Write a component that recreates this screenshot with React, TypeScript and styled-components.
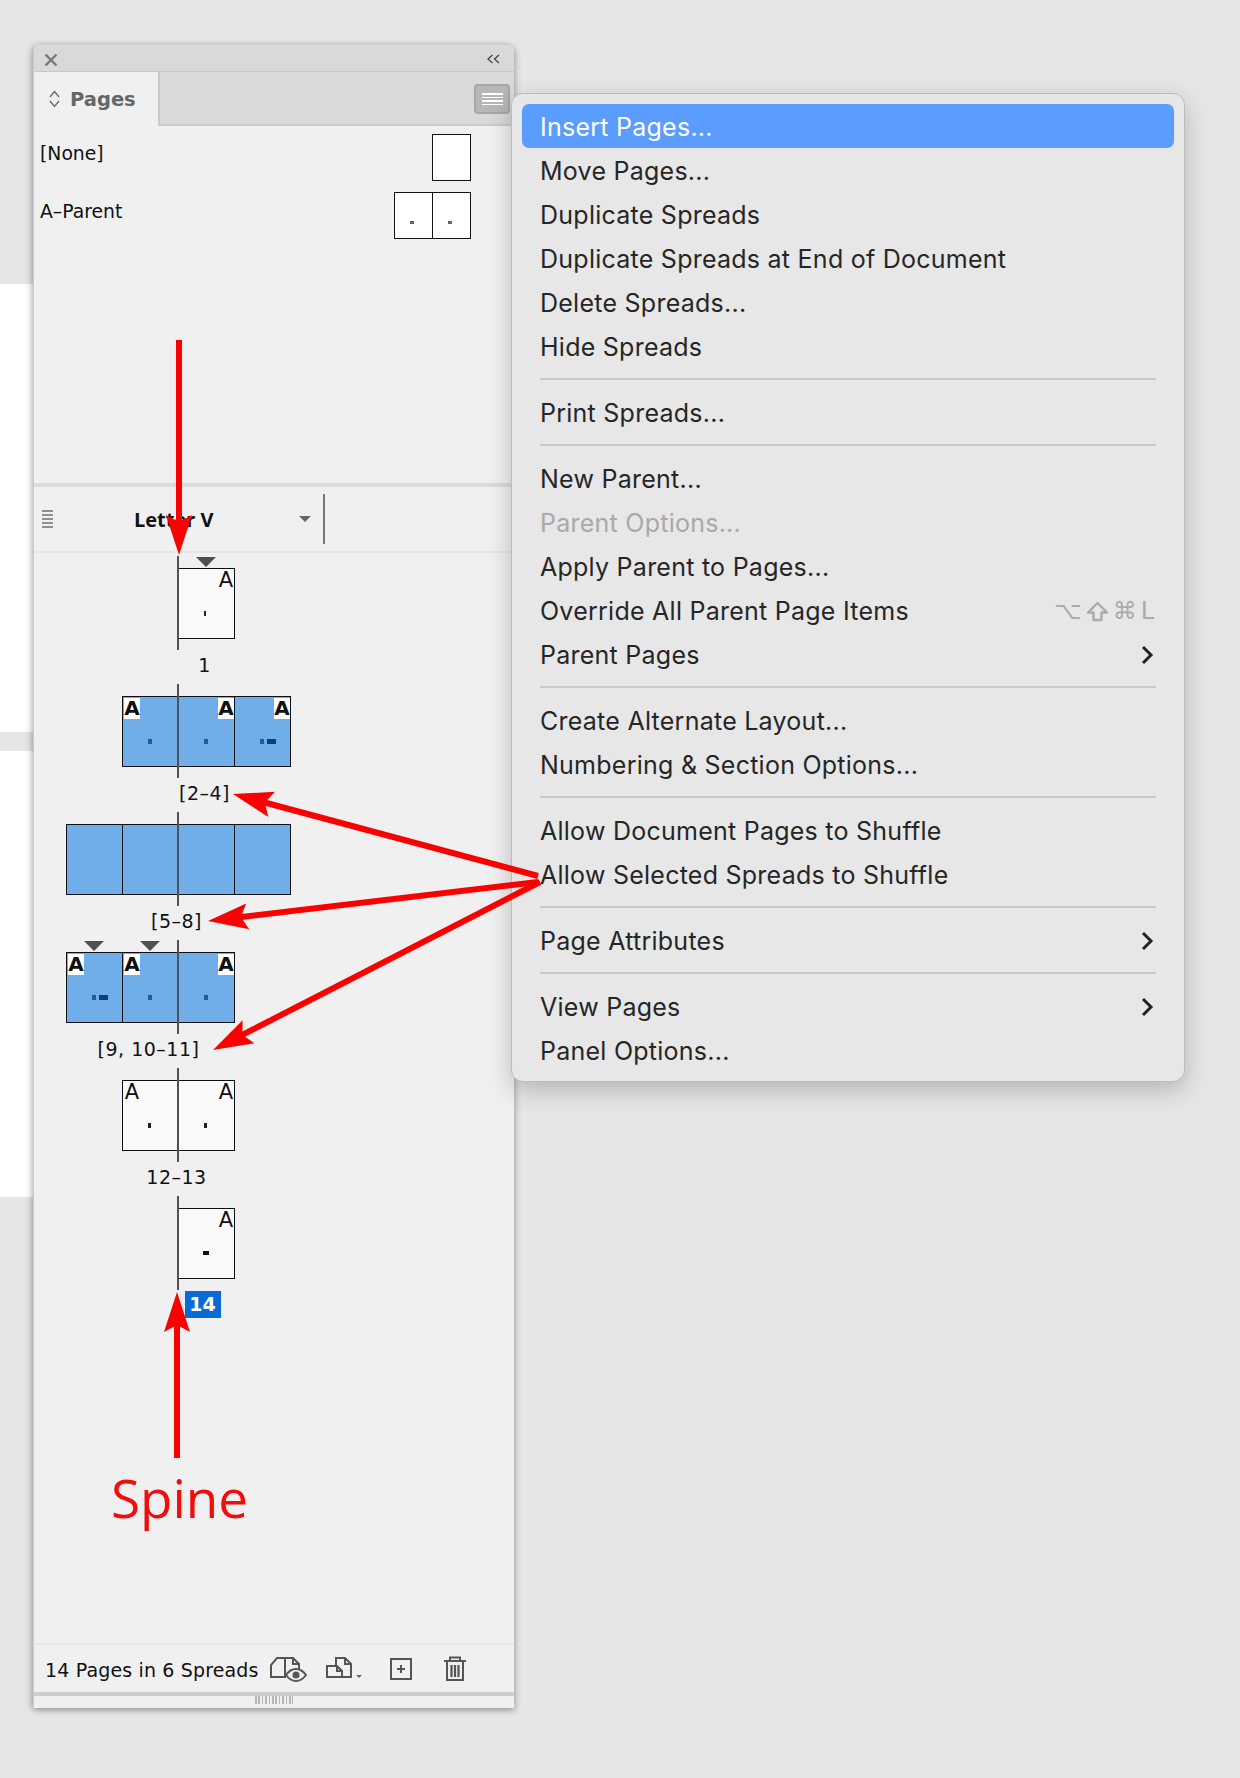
import React from "react";
import styled, { createGlobalStyle } from "styled-components";

const Global = createGlobalStyle`
  html, body { margin: 0; padding: 0; background: #e6e6e6; }
  * { box-sizing: border-box; }
`;

const Stage = styled.div`
  position: relative;
  width: 1240px;
  height: 1778px;
  padding-top: 44px;
  display: flex;
  align-items: flex-start;
  overflow: hidden;
  background: #e6e6e6;
`;

const Backdrop = styled.div`
  width: 33px;
  padding-top: 240px;
  display: flex;
  flex-direction: column;
  gap: 19px;
`;

const Sheet = styled.div<{ $h: number }>`
  height: ${(p) => p.$h}px;
  background: #fff;
`;

const Panel = styled.div`
  width: 481px;
  height: 1664px;
  display: flex;
  flex-direction: column;
  background: #f0f0f1;
  border-radius: 6px 6px 0 0;
  border-left: 1px solid #c9c9c9;
  box-shadow: -2px 1px 6px rgba(0, 0, 0, 0.22), 2px 3px 6px rgba(0, 0, 0, 0.2);
  font-family: "DejaVu Sans", sans-serif;
  color: #111;
`;

const TitleStrip = styled.div`
  height: 28px;
  flex: none;
  background: #d9d9d9;
  border-top: 1px solid #cbcbcb;
  border-bottom: 1px solid #c8c8c8;
  border-radius: 6px 6px 0 0;
  display: flex;
  align-items: center;
  justify-content: space-between;
  padding: 0 14px 0 10px;
`;

const CloseIcon = styled.svg`
  margin-top: 3px;
  fill: none;
  stroke: #777;
  stroke-width: 2.4;
`;

const CollapseIcon = styled.svg`
  margin-top: 1px;
  fill: none;
  stroke: #444;
  stroke-width: 1.4;
`;

const TabBar = styled.div`
  height: 54px;
  flex: none;
  background: #d9d9d9;
  border-bottom: 2px solid #cbcbcb;
  display: flex;
  align-items: flex-start;
  justify-content: space-between;
  padding-right: 4px;
`;

const Tab = styled.div`
  width: 126px;
  height: 54px;
  background: #f0f0f1;
  border-right: 2px solid #cbcbcb;
  display: flex;
  align-items: center;
  gap: 10px;
  padding: 0 0 0 15px;
  font-size: 19.5px;
  font-weight: 700;
  color: #666;
`;

const TabArrows = styled.svg`
  fill: none;
  stroke: #666;
  stroke-width: 1.3;
`;

const MenuButton = styled.div`
  width: 36px;
  height: 30px;
  margin-top: 12px;
  background: #b7b7b7;
  border: 2px solid #a6a6a6;
  border-radius: 4px;
  display: flex;
  flex-direction: column;
  align-items: center;
  justify-content: center;
  gap: 2px;
`;

const MenuLine = styled.span`
  width: 21px;
  height: 1.5px;
  background: #fff;
`;

const ParentList = styled.div`
  height: 357px;
  flex: none;
  padding: 8px 43px 0 6px;
  display: flex;
  flex-direction: column;
  gap: 11px;
`;

const ParentRow = styled.div`
  display: flex;
  justify-content: space-between;
  align-items: flex-start;
  font-size: 18.8px;
  line-height: 22px;
  height: 47px;
`;

const ParentName = styled.span`
  margin-top: 9px;
`;

const ParentThumbs = styled.div`
  display: flex;
`;

const ParentPage = styled.div`
  position: relative;
  width: 39px;
  height: 47px;
  margin-left: -1px;
  background: #fff;
  border: 1px solid #111;
  &:first-child { margin-left: 0; }
`;

const ParentDot = styled.span`
  position: absolute;
  left: 15px;
  top: 28px;
  width: 4px;
  height: 3px;
  background: #666;
`;

const Divider = styled.div`
  height: 4px;
  flex: none;
  background: #dbdbdb;
`;

const SizeRow = styled.div`
  height: 66px;
  flex: none;
  border-bottom: 2px solid #e6e6e6;
  display: flex;
  align-items: center;
  padding-left: 8px;
`;

const Grip = styled.div`
  width: 11px;
  display: flex;
  flex-direction: column;
  gap: 2px;
`;

const GripLine = styled.span`
  height: 2px;
  background: #8f8f8f;
`;

const SizeName = styled.span`
  margin-left: 81px;
  width: 165px;
  font-family: "Open Sans", sans-serif;
  font-size: 20px;
  font-weight: 700;
  color: #111;
`;

const DropArrow = styled.span`
  width: 0;
  height: 0;
  border-left: 6.5px solid transparent;
  border-right: 6.5px solid transparent;
  border-top: 6px solid #666;
`;

const SizeRule = styled.span`
  width: 2px;
  height: 50px;
  margin-left: 12px;
  background: #777;
`;

const PagesArea = styled.div`
  flex: 1;
  padding-top: 3px;
`;

const SpreadBlock = styled.div<{ $left: number }>`
  position: relative;
  width: fit-content;
  height: 128px;
  margin-left: ${(p) => 144 - p.$left * 56}px;
  padding-top: 12px;
  display: flex;
  flex-direction: column;
  align-items: center;
`;

const Strip = styled.div`
  display: flex;
`;

const Spine = styled.span<{ $left: number }>`
  position: absolute;
  top: 0;
  left: ${(p) => p.$left * 56 - 1}px;
  width: 2px;
  height: 94px;
  background: #4c5258;
  z-index: 2;
`;

const Page = styled.div<{ $blue?: boolean }>`
  position: relative;
  width: 57px;
  height: 71px;
  margin-left: -1px;
  background: ${(p) => (p.$blue ? "#70aee9" : "#fbfafa")};
  border: 1px solid #0c0f14;
  &:first-child { margin-left: 0; }
`;

const Marker = styled.span`
  position: absolute;
  top: -12px;
  left: 17px;
  width: 0;
  height: 0;
  border-left: 10px solid transparent;
  border-right: 10px solid transparent;
  border-top: 10px solid #4f4f4f;
`;

const PrefixA = styled.span<{ $blue?: boolean; $side: "l" | "r" }>`
  position: absolute;
  top: 1px;
  ${(p) => (p.$side === "l" ? "left: 1px;" : "right: 0;")}
  width: 16px;
  height: 21px;
  line-height: 21px;
  text-align: center;
  font-size: ${(p) => (p.$blue ? 20 : 21)}px;
  font-weight: ${(p) => (p.$blue ? 700 : 400)};
  color: #111;
  background: ${(p) => (p.$blue ? "#fff" : "transparent")};
`;

const Dot = styled.span<{ $l: number; $w: number; $h: number; $c: string }>`
  position: absolute;
  top: 42px;
  left: ${(p) => p.$l}px;
  width: ${(p) => p.$w}px;
  height: ${(p) => p.$h}px;
  background: ${(p) => p.$c};
`;

const SpreadLabel = styled.div`
  margin: 15px 4px 0 0;
  height: 22px;
  line-height: 22px;
  font-size: 19px;
  letter-spacing: 0.5px;
  white-space: nowrap;
`;

const CurrentLabel = styled.div`
  margin: 12px 8px 0 0;
  width: 36px;
  height: 27px;
  line-height: 27px;
  background: #0a6ad6;
  color: #fff;
  font-size: 19px;
  font-weight: 700;
  text-align: center;
`;

const Footer = styled.div`
  height: 49px;
  flex: none;
  border-top: 2px solid #e8e8e8;
  display: flex;
  align-items: center;
  padding-left: 11px;
`;

const FooterText = styled.span`
  font-size: 19px;
  letter-spacing: 0.15px;
  width: 225px;
  margin-top: 2px;
  white-space: nowrap;
`;

const FooterIcon = styled.svg<{ $gap: number }>`
  flex: none;
  margin-left: ${(p) => p.$gap}px;
  fill: none;
  stroke: #555;
  stroke-width: 2;
`;

const ResizeBar = styled.div`
  height: 16px;
  flex: none;
  border-top: 4px solid #cdcdcd;
  display: flex;
  justify-content: center;
`;

const ResizeTicks = styled.div`
  width: 38px;
  height: 8px;
  background: repeating-linear-gradient(90deg, #b5b5b5 0 1.5px, transparent 1.5px 3.4px);
`;

const Menu = styled.div`
  position: absolute;
  left: 511px;
  top: 93px;
  width: 674px;
  height: 989px;
  padding: 10px;
  background: #e7e7e7;
  border: 1px solid #bcbcbc;
  border-radius: 12px;
  box-shadow: 0 8px 24px rgba(0, 0, 0, 0.22);
  font-family: Inter, sans-serif;
  font-size: 25px;
  letter-spacing: 0.25px;
  color: #262626;
  z-index: 5;
`;

const MenuRow = styled.div<{ $active?: boolean; $off?: boolean }>`
  height: 44px;
  padding: 2px 20px 0 18px;
  display: flex;
  align-items: center;
  justify-content: space-between;
  border-radius: 7px;
  white-space: nowrap;
  background: ${(p) => (p.$active ? "#5a9cff" : "transparent")};
  color: ${(p) => (p.$active ? "#fff" : p.$off ? "#a9a9a9" : "inherit")};
`;

const MenuSep = styled.div`
  height: 2px;
  margin: 10px 18px;
  background: #cacaca;
`;

const Shortcut = styled.span`
  display: flex;
  align-items: center;
  gap: 4px;
  font-family: "DejaVu Sans", sans-serif;
  font-size: 24px;
  letter-spacing: 0;
  color: #ababab;
`;

const ShiftGlyph = styled.svg`
  fill: none;
  stroke: #ababab;
  stroke-width: 2.4;
  stroke-linejoin: round;
`;

const Chevron = styled.svg`
  fill: none;
  stroke: #222;
  stroke-width: 3;
`;

const Overlay = styled.svg`
  position: absolute;
  inset: 0;
  width: 1240px;
  height: 1778px;
  z-index: 6;
  pointer-events: none;
`;

const SpineNote = styled.span`
  position: absolute;
  left: 111px;
  top: 1459px;
  font-family: "Open Sans", sans-serif;
  font-size: 53px;
  line-height: 78px;
  color: #f20d0d;
  z-index: 6;
`;

type DotSpec = [number, number, number, string];

type P = {
  blue?: boolean;
  mark?: boolean;
  a?: "l" | "r";
  dots?: DotSpec[];
};

type S = { left: number; pages: P[]; label: string; current?: boolean };

const navy = "#1d5a9e";
const one: DotSpec[] = [[25, 4, 5, navy]];
const two: DotSpec[] = [[25, 4, 5, navy], [32, 9, 5, "#0d3f7c"]];
const ink: DotSpec[] = [[25, 2, 5, "#222"]];

const spreads: S[] = [
  { left: 0, label: "1", pages: [{ mark: true, a: "r", dots: ink }] },
  {
    left: 1,
    label: "[2–4]",
    pages: [
      { blue: true, a: "l", dots: one },
      { blue: true, a: "r", dots: one },
      { blue: true, a: "r", dots: two },
    ],
  },
  { left: 2, label: "[5–8]", pages: [{ blue: true }, { blue: true }, { blue: true }, { blue: true }] },
  {
    left: 2,
    label: "[9, 10–11]",
    pages: [
      { blue: true, mark: true, a: "l", dots: two },
      { blue: true, mark: true, a: "l", dots: one },
      { blue: true, a: "r", dots: one },
    ],
  },
  {
    left: 1,
    label: "12–13",
    pages: [
      { a: "l", dots: [[25, 3, 5, "#222"]] },
      { a: "r", dots: [[25, 3, 5, "#222"]] },
    ],
  },
  { left: 0, label: "14", current: true, pages: [{ a: "r", dots: [[24, 6, 4, "#111"]] }] },
];

type Item = { t: string; active?: boolean; off?: boolean; sub?: boolean; keys?: boolean } | "sep";

const items: Item[] = [
  { t: "Insert Pages...", active: true },
  { t: "Move Pages..." },
  { t: "Duplicate Spreads" },
  { t: "Duplicate Spreads at End of Document" },
  { t: "Delete Spreads..." },
  { t: "Hide Spreads" },
  "sep",
  { t: "Print Spreads..." },
  "sep",
  { t: "New Parent..." },
  { t: "Parent Options...", off: true },
  { t: "Apply Parent to Pages..." },
  { t: "Override All Parent Page Items", keys: true },
  { t: "Parent Pages", sub: true },
  "sep",
  { t: "Create Alternate Layout..." },
  { t: "Numbering & Section Options..." },
  "sep",
  { t: "Allow Document Pages to Shuffle" },
  { t: "Allow Selected Spreads to Shuffle" },
  "sep",
  { t: "Page Attributes", sub: true },
  "sep",
  { t: "View Pages", sub: true },
  { t: "Panel Options..." },
];

function Arrow({ x1, y1, x2, y2 }: { x1: number; y1: number; x2: number; y2: number }) {
  const len = Math.hypot(x2 - x1, y2 - y1);
  const ux = (x2 - x1) / len;
  const uy = (y2 - y1) / len;
  const nx = -uy;
  const ny = ux;
  const at = (back: number, side: number) => `${x2 - ux * back + nx * side},${y2 - uy * back + ny * side}`;
  return (
    <g>
      <line x1={x1} y1={y1} x2={x2 - ux * 28} y2={y2 - uy * 28} stroke="#fb0000" strokeWidth={6} />
      <polygon points={[at(0, 0), at(40, 13), at(33, 0), at(40, -13)].join(" ")} fill="#fb0000" />
    </g>
  );
}

export default function App() {
  return (
    <Stage>
      <Global />
      <Backdrop>
        <Sheet $h={448} />
        <Sheet $h={446} />
      </Backdrop>
      <Panel>
        <TitleStrip>
          <CloseIcon width="14" height="14" viewBox="0 0 14 14">
            <path d="M1.5 1.5 12.5 12.5M12.5 1.5 1.5 12.5" />
          </CloseIcon>
          <CollapseIcon width="13" height="10" viewBox="0 0 13 10">
            <path d="M5.5 1 1 5l4.5 4M12 1 7.5 5l4.5 4" />
          </CollapseIcon>
        </TitleStrip>
        <TabBar>
          <Tab>
            <TabArrows width="11" height="18" viewBox="0 0 11 18">
              <path d="M1 7 5.5 1.5 10 7M1 11l4.5 5.5L10 11" />
            </TabArrows>
            Pages
          </Tab>
          <MenuButton>
            <MenuLine />
            <MenuLine />
            <MenuLine />
            <MenuLine />
          </MenuButton>
        </TabBar>
        <ParentList>
          <ParentRow>
            <ParentName>[None]</ParentName>
            <ParentThumbs>
              <ParentPage />
            </ParentThumbs>
          </ParentRow>
          <ParentRow>
            <ParentName>A–Parent</ParentName>
            <ParentThumbs>
              <ParentPage>
                <ParentDot />
              </ParentPage>
              <ParentPage>
                <ParentDot />
              </ParentPage>
            </ParentThumbs>
          </ParentRow>
        </ParentList>
        <Divider />
        <SizeRow>
          <Grip>
            <GripLine />
            <GripLine />
            <GripLine />
            <GripLine />
            <GripLine />
          </Grip>
          <SizeName>Letter V</SizeName>
          <DropArrow />
          <SizeRule />
        </SizeRow>
        <PagesArea>
          {spreads.map((s) => (
            <SpreadBlock key={s.label} $left={s.left}>
              <Spine $left={s.left} />
              <Strip>
                {s.pages.map((p, i) => (
                  <Page key={i} $blue={p.blue}>
                    {p.mark && <Marker />}
                    {p.a && (
                      <PrefixA $blue={p.blue} $side={p.a}>
                        A
                      </PrefixA>
                    )}
                    {p.dots?.map((d, j) => (
                      <Dot key={j} $l={d[0]} $w={d[1]} $h={d[2]} $c={d[3]} />
                    ))}
                  </Page>
                ))}
              </Strip>
              {s.current ? <CurrentLabel>{s.label}</CurrentLabel> : <SpreadLabel>{s.label}</SpreadLabel>}
            </SpreadBlock>
          ))}
        </PagesArea>
        <Footer>
          <FooterText>14 Pages in 6 Spreads</FooterText>
          <FooterIcon $gap={0} width="37" height="26" viewBox="0 0 37 26">
            <path d="M1 21V9l6-7h8v19zM15 2h8l6 6v5" />
            <path d="M23 2v6h6" />
            <path d="M16 19c2.500-3.500 6-6 10-6s7.500 2.500 10 6c-2.500 3.500-6 6-10 6s-7.500-2.500-10-6z" fill="#f0f0f1" />
            <circle cx="26" cy="19" r="3.500" fill="#555" stroke="none" />
          </FooterIcon>
          <FooterIcon $gap={19} width="38" height="26" viewBox="0 0 38 26">
            <path d="M10 10V2h9l6 6v13h-9" />
            <path d="M19 2v6h6" />
            <path d="M1 21V10h10l5 5v6zM11 10v5h5" />
            <path d="M30 19h6l-3 3z" fill="#666" stroke="none" />
          </FooterIcon>
          <FooterIcon $gap={26} width="22" height="24" viewBox="0 0 22 24">
            <rect x="1" y="2" width="20" height="20" />
            <path d="M11 8v8M7 12h8" />
          </FooterIcon>
          <FooterIcon $gap={32} width="22" height="26" viewBox="0 0 22 26">
            <path d="M0 5h22M6 5V1.500h10V5M3 5v19h16V5" />
            <path d="M7.500 9v12M11 9v12M14.500 9v12" strokeWidth="2.200" />
          </FooterIcon>
        </Footer>
        <ResizeBar>
          <ResizeTicks />
        </ResizeBar>
      </Panel>
      <Menu>
        {items.map((it, i) =>
          it === "sep" ? (
            <MenuSep key={i} />
          ) : (
            <MenuRow key={i} $active={it.active} $off={it.off}>
              {it.t}
              {it.keys && (
                <Shortcut>
                  <span>⌥</span>
                  <ShiftGlyph width="23" height="21" viewBox="0 0 23 21">
                    <path d="M11.500 2 21 11.500h-5.500V19h-8v-7.500H2z" />
                  </ShiftGlyph>
                  <span>⌘</span>
                  <span>L</span>
                </Shortcut>
              )}
              {it.sub && (
                <Chevron width="13" height="20" viewBox="0 0 13 20">
                  <path d="M2 2l8 8-8 8" />
                </Chevron>
              )}
            </MenuRow>
          ),
        )}
      </Menu>
      <Overlay viewBox="0 0 1240 1778">
        <Arrow x1={179} y1={340} x2={179} y2={555} />
        <Arrow x1={177} y1={1458} x2={177} y2={1292} />
        <Arrow x1={538} y1={876} x2={233} y2={794} />
        <Arrow x1={538} y1={882} x2={208} y2={921} />
        <Arrow x1={540} y1={882} x2={213} y2={1050} />
      </Overlay>
      <SpineNote>Spine</SpineNote>
    </Stage>
  );
}
